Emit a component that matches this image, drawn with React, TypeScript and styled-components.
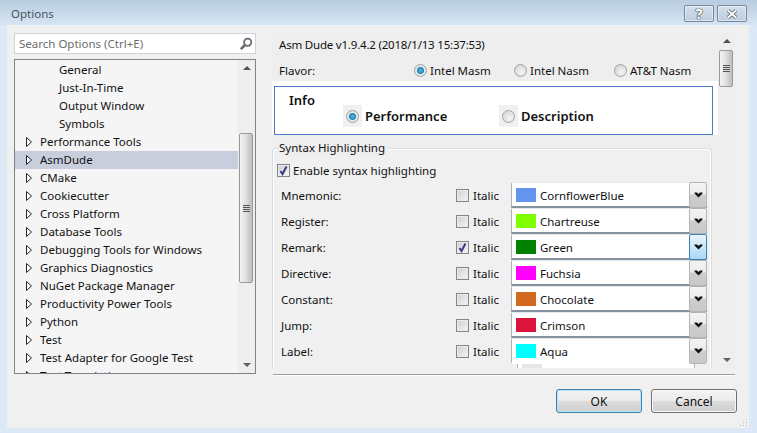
import React from "react";
import styled, { createGlobalStyle } from "styled-components";

const GlobalStyle = createGlobalStyle`
  html, body {
    margin: 0;
    padding: 0;
    overflow: hidden;
    background: #dce8f5;
  }
  * {
    box-sizing: border-box;
  }
`;

const Window = styled.div`
  width: 757px;
  height: 433px;
  display: flex;
  flex-direction: column;
  background: #dce8f5;
  font-family: "Noto Sans", "Open Sans", sans-serif;
  font-size: 11.5px;
  color: #111;
`;

const TitleBar = styled.div`
  height: 25px;
  flex: none;
  display: flex;
  align-items: flex-start;
  justify-content: space-between;
  padding: 5px 10px 0 11px;
  background: linear-gradient(#b8ccdf, #d6e5f4);
`;

const TitleText = styled.div`
  color: #4a5560;
  line-height: 17px;
`;

const TitleButtons = styled.div`
  display: flex;
  gap: 3px;
`;

const TitleButton = styled.div`
  width: 30px;
  height: 17px;
  border: 1px solid #76889a;
  border-radius: 2px;
  display: flex;
  align-items: center;
  justify-content: center;
  background: linear-gradient(#d3e0ec, #bccedf);
  box-shadow: inset 0 0 0 1px rgba(255, 255, 255, 0.45);
  color: #fff;
  font-size: 15px;
  font-weight: 700;
  line-height: 15px;
  text-shadow: 0 0 1px #333, 0 0 1px #333, 0 0 1px #333;
`;

const Content = styled.div`
  position: relative;
  height: 403px;
  margin: 0 8px 0 7px;
  padding: 8px 0 0 7px;
  display: flex;
  flex-direction: column;
  background: #f0f0f0;
`;

const Panes = styled.div`
  display: flex;
  gap: 16px;
  height: 341px;
`;

const LeftPane = styled.div`
  width: 242px;
  display: flex;
  flex-direction: column;
  gap: 5px;
`;

const SearchBox = styled.div`
  height: 21px;
  flex: none;
  display: flex;
  align-items: center;
  justify-content: space-between;
  padding: 0 2px 0 4px;
  background: #fff;
  border: 1px solid #ccd3dc;
  color: #6d6d6d;
`;

const Tree = styled.div`
  flex: 1;
  display: flex;
  min-height: 0;
  background: #f5f5f5;
  border: 1px solid #82828e;
`;

const TreeList = styled.div`
  flex: 1;
  padding-top: 1px;
  overflow: hidden;
`;

const TreeRow = styled.div<{ $selected?: boolean; $child?: boolean }>`
  height: 18px;
  display: flex;
  align-items: center;
  padding-left: ${(p) => (p.$child ? "44px" : "11px")};
  background: ${(p) => (p.$selected ? "#c9cedd" : "transparent")};
  line-height: 18px;
  white-space: nowrap;
`;

const Twisty = styled.svg`
  width: 6px;
  height: 10px;
  margin-right: 8px;
  flex: none;
`;

const ScrollBar = styled.div<{ $width: number }>`
  width: ${(p) => p.$width}px;
  flex: none;
  display: flex;
  flex-direction: column;
  align-items: center;
  justify-content: space-between;
  background: #eeeeee;
  position: relative;
`;

const ScrollArrow = styled.div<{ $up?: boolean }>`
  width: 0;
  height: 0;
  margin: 6px 0;
  border-left: 4px solid transparent;
  border-right: 4px solid transparent;
  ${(p) => (p.$up ? "border-bottom: 4px solid #505050;" : "border-top: 4px solid #606060;")}
`;

const ScrollThumb = styled.div<{ $top: number; $height: number }>`
  position: absolute;
  top: ${(p) => p.$top}px;
  left: 1px;
  width: 14px;
  height: ${(p) => p.$height}px;
  border: 1px solid #9a9a9a;
  border-radius: 2px;
  background: linear-gradient(90deg, #f4f4f4, #e2e2e2 45%, #bdbdbd);
  display: flex;
  align-items: center;
  justify-content: center;
`;

const ThumbGrip = styled.div`
  width: 7px;
  height: 7px;
  background: repeating-linear-gradient(#555 0 1px, #d8d8d8 1px 2px);
`;

const RightPane = styled.div`
  width: 463px;
  height: 335px;
  display: flex;
`;

const ScrollView = styled.div`
  flex: 1;
  overflow: hidden;
  background: #eeeeee;
`;

const VersionLine = styled.div`
  height: 24px;
  padding-left: 7px;
  line-height: 24px;
  letter-spacing: -0.2px;
`;

const FlavorRow = styled.div`
  height: 24px;
  padding: 2px 0 0 7px;
  display: grid;
  grid-template-columns: 135px 100px 100px 1fr;
  align-items: center;
`;

const RadioLabel = styled.label`
  display: flex;
  align-items: center;
  gap: 3px;
`;

const Radio = styled.span<{ $checked?: boolean }>`
  width: 13px;
  height: 13px;
  flex: none;
  border-radius: 50%;
  border: 1px solid #a3a3a3;
  background: ${(p) =>
    p.$checked
      ? "radial-gradient(circle, #5cc3e6 0, #1d85b4 3px, #e4e6e8 4px, #dcdcdc 100%)"
      : "radial-gradient(circle at 60% 65%, #f4f4f4 0, #dedede 60%, #cfcfcf 100%)"};
`;

const InfoBand = styled.div`
  padding: 5px 5px 0 2px;
  background: #fff;
`;

const InfoBox = styled.div`
  height: 49px;
  padding: 5px 0 0 14px;
  background: #fff;
  border: 1px solid #4a7cc8;
`;

const InfoTitle = styled.div`
  font-size: 13px;
  font-weight: 600;
  line-height: 17px;
`;

const InfoOptions = styled.div`
  display: grid;
  grid-template-columns: 156px 1fr;
  margin: -4px 0 0 54px;
`;

const InfoOption = styled.div`
  display: flex;
  align-items: center;
  font-size: 13px;
  font-weight: 600;
`;

const RadioWell = styled.span`
  width: 19px;
  height: 22px;
  margin-right: 3px;
  display: flex;
  align-items: center;
  justify-content: center;
  background: #f0f0f0;
`;

const GroupBox = styled.fieldset`
  margin: 5px 6px 0 0;
  padding: 0;
  height: 300px;
  border: 1px solid #d5dce2;
  border-radius: 3px;
  box-shadow: inset 0 0 0 1px #fff;
  background: #f0f0f0;
`;

const GroupLegend = styled.legend`
  margin-left: 5px;
  padding: 0 2px 0 1px;
  line-height: 16px;
  background: #eeeeee;
`;

const EnableRow = styled.div`
  height: 20px;
  margin: 4px 0 2px 4px;
  display: flex;
  align-items: center;
  gap: 3px;
`;

const CheckBox = styled.span`
  width: 13px;
  height: 13px;
  flex: none;
  border: 1px solid #858585;
  background: linear-gradient(135deg, #cfcfcf, #f6f6f6);
  box-shadow: inset 0 0 0 1px #ececec;
  display: flex;
  align-items: center;
  justify-content: center;
`;

const ColorRow = styled.div`
  height: 26px;
  display: grid;
  grid-template-columns: 175px 55px 196px;
  align-items: center;
  padding-left: 8px;
`;

const ItalicLabel = styled.div`
  display: flex;
  align-items: center;
  gap: 4px;
`;

const Combo = styled.div<{ $cut?: boolean }>`
  height: 26px;
  display: flex;
  background: #fff;
  border-left: 1px solid #aab2ba;
  border-top: 1px solid #e4e8ec;
  border-bottom: 2px solid ${(p) => (p.$cut ? "#fff" : "#8694a2")};
  border-radius: 2px 2px 0 0;
`;

const ComboValue = styled.div`
  flex: 1;
  display: flex;
  align-items: center;
  gap: 4px;
  padding: 1px 0 0 4px;
`;

const Swatch = styled.span<{ $color: string }>`
  width: 20px;
  height: 14px;
  flex: none;
  background: ${(p) => p.$color};
`;

const ComboButton = styled.div<{ $hot?: boolean }>`
  width: 18px;
  margin: -1px 0 -2px 0;
  display: flex;
  align-items: center;
  justify-content: center;
  border: 1px solid ${(p) => (p.$hot ? "#3c7fb1" : "#b5b5b5")};
  border-radius: 2px;
  background: ${(p) =>
    p.$hot
      ? "linear-gradient(#eaf6fd, #a7d9f5)"
      : "linear-gradient(#f4f4f4 0, #ececec 45%, #cdcdcd 50%, #c9c9c9 100%)"};
`;

const GhostRow = styled.div`
  height: 6px;
  margin-left: 244px;
  width: 178px;
  padding: 0 0 0 4px;
  background: #fff;
  border-left: 1px solid #aab2ba;
  border-right: 1px solid #aab2ba;
`;

const GhostSwatch = styled.div`
  width: 20px;
  height: 6px;
  background: #e6e6e6;
`;

const Separator = styled.div`
  height: 2px;
  margin-left: 259px;
  width: 462px;
  border-top: 1px solid #a0a0a0;
  border-bottom: 1px solid #fff;
`;

const Footer = styled.div`
  display: flex;
  justify-content: flex-end;
  gap: 9px;
  margin-top: 13px;
  padding-right: 12px;
`;

const DialogButton = styled.button<{ $default?: boolean }>`
  width: 86px;
  height: 24px;
  padding: 0;
  font: inherit;
  font-size: 12px;
  color: #111;
  border: 1px solid ${(p) => (p.$default ? "#3c7fb1" : "#707070")};
  border-radius: 3px;
  background: linear-gradient(#f3f3f3 0, #ebebeb 48%, #dcdcdc 52%, #cfcfcf 100%);
  box-shadow: inset 0 0 0 1px ${(p) => (p.$default ? "#b5e3f7" : "#f8f8f8")};
`;

const ResizeGrip = styled.svg`
  position: absolute;
  right: 1px;
  bottom: 1px;
  width: 9px;
  height: 9px;
`;

const topics = [
  "Performance Tools",
  "AsmDude",
  "CMake",
  "Cookiecutter",
  "Cross Platform",
  "Database Tools",
  "Debugging Tools for Windows",
  "Graphics Diagnostics",
  "NuGet Package Manager",
  "Productivity Power Tools",
  "Python",
  "Test",
  "Test Adapter for Google Test",
  "Test Translation",
];

const colorRows = [
  { label: "Mnemonic:", name: "CornflowerBlue", color: "#6495ed" },
  { label: "Register:", name: "Chartreuse", color: "#7fff00" },
  { label: "Remark:", name: "Green", color: "#008000", italic: true, hot: true },
  { label: "Directive:", name: "Fuchsia", color: "#ff00ff" },
  { label: "Constant:", name: "Chocolate", color: "#d2691e" },
  { label: "Jump:", name: "Crimson", color: "#dc143c" },
  { label: "Label:", name: "Aqua", color: "#00ffff", cut: true },
];

const CheckMark = () => (
  <svg width="11" height="11" viewBox="0 0 11 11">
    <path d="M2.5 6 L4.5 9 L8.5 1.5" fill="none" stroke="#3a3a8c" strokeWidth="2" />
  </svg>
);

const Chevron = () => (
  <svg width="9" height="6" viewBox="0 0 9 6">
    <path d="M0.5 0.5 H3 L4.5 2 L6 0.5 H8.5 V1.5 L4.5 5.5 L0.5 1.5 Z" fill="#111" />
  </svg>
);

export default function App() {
  return (
    <Window>
      <GlobalStyle />
      <TitleBar>
        <TitleText>Options</TitleText>
        <TitleButtons>
          <TitleButton>?</TitleButton>
          <TitleButton>
            <svg width="14" height="10" viewBox="0 0 14 10">
              <path d="M3 1.5 L11 8.5 M11 1.5 L3 8.5" stroke="#555" strokeWidth="3.6" />
              <path d="M3 1.5 L11 8.5 M11 1.5 L3 8.5" stroke="#fff" strokeWidth="2" />
            </svg>
          </TitleButton>
        </TitleButtons>
      </TitleBar>
      <Content>
        <Panes>
          <LeftPane>
            <SearchBox>
              <span>Search Options (Ctrl+E)</span>
              <svg width="14" height="14" viewBox="0 0 14 14">
                <circle cx="8.7" cy="5.3" r="3.6" fill="none" stroke="#6b6b6b" strokeWidth="1.8" />
                <path d="M6 8 L1.8 12.2" stroke="#6b6b6b" strokeWidth="2.6" />
              </svg>
            </SearchBox>
            <Tree>
              <TreeList>
                {["General", "Just-In-Time", "Output Window", "Symbols"].map((name) => (
                  <TreeRow key={name} $child>
                    {name}
                  </TreeRow>
                ))}
                {topics.map((name) => (
                  <TreeRow key={name} $selected={name === "AsmDude"}>
                    <Twisty viewBox="0 0 6 10">
                      <path d="M0.5 0.5 L5.5 5 L0.5 9.5 Z" fill="#fff" stroke="#222" />
                    </Twisty>
                    {name}
                  </TreeRow>
                ))}
              </TreeList>
              <ScrollBar $width={17}>
                <ScrollArrow $up />
                <ScrollThumb $top={73} $height={150}>
                  <ThumbGrip />
                </ScrollThumb>
                <ScrollArrow />
              </ScrollBar>
            </Tree>
          </LeftPane>
          <RightPane>
            <ScrollView>
              <VersionLine>Asm Dude v1.9.4.2 (2018/1/13 15:37:53)</VersionLine>
              <FlavorRow>
                <span>Flavor:</span>
                <RadioLabel>
                  <Radio $checked />
                  Intel Masm
                </RadioLabel>
                <RadioLabel>
                  <Radio />
                  Intel Nasm
                </RadioLabel>
                <RadioLabel>
                  <Radio />
                  AT&amp;T Nasm
                </RadioLabel>
              </FlavorRow>
              <InfoBand>
                <InfoBox>
                  <InfoTitle>Info</InfoTitle>
                  <InfoOptions>
                    <InfoOption>
                      <RadioWell>
                        <Radio $checked />
                      </RadioWell>
                      Performance
                    </InfoOption>
                    <InfoOption>
                      <RadioWell>
                        <Radio />
                      </RadioWell>
                      Description
                    </InfoOption>
                  </InfoOptions>
                </InfoBox>
              </InfoBand>
              <GroupBox>
                <GroupLegend>Syntax Highlighting</GroupLegend>
                <EnableRow>
                  <CheckBox>
                    <CheckMark />
                  </CheckBox>
                  Enable syntax highlighting
                </EnableRow>
                {colorRows.map((row) => (
                  <ColorRow key={row.label}>
                    <span>{row.label}</span>
                    <ItalicLabel>
                      <CheckBox>{row.italic && <CheckMark />}</CheckBox>
                      Italic
                    </ItalicLabel>
                    <Combo $cut={row.cut}>
                      <ComboValue>
                        <Swatch $color={row.color} />
                        {row.name}
                      </ComboValue>
                      <ComboButton $hot={row.hot}>
                        <Chevron />
                      </ComboButton>
                    </Combo>
                  </ColorRow>
                ))}
                <GhostRow>
                  <GhostSwatch />
                </GhostRow>
              </GroupBox>
            </ScrollView>
            <ScrollBar $width={17}>
              <ScrollArrow $up />
              <ScrollThumb $top={17} $height={37}>
                <ThumbGrip />
              </ScrollThumb>
              <ScrollArrow />
            </ScrollBar>
          </RightPane>
        </Panes>
        <Separator />
        <Footer>
          <DialogButton $default>OK</DialogButton>
          <DialogButton>Cancel</DialogButton>
        </Footer>
        <ResizeGrip viewBox="0 0 9 9">
          <path d="M7 1h1v1H7zM4 4h1v1H4zM7 4h1v1H7zM1 7h1v1H1zM4 7h1v1H4zM7 7h1v1H7z" fill="#b8b8b8" />
        </ResizeGrip>
      </Content>
    </Window>
  );
}
